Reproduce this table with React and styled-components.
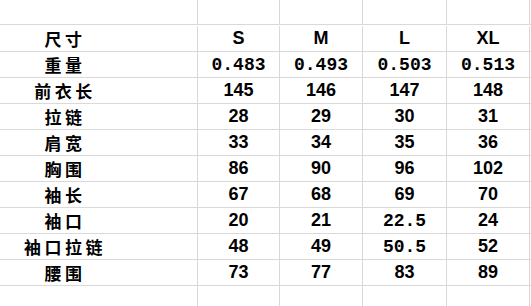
import React from "react";
import styled, { createGlobalStyle } from "styled-components";

const sizes = ["S", "M", "L", "XL"];

const rows = [
  { label: "重量", values: ["0.483", "0.493", "0.503", "0.513"] },
  { label: "前衣长", values: ["145", "146", "147", "148"] },
  { label: "拉链", values: ["28", "29", "30", "31"] },
  { label: "肩宽", values: ["33", "34", "35", "36"] },
  { label: "胸围", values: ["86", "90", "96", "102"] },
  { label: "袖长", values: ["67", "68", "69", "70"] },
  { label: "袖口", values: ["20", "21", "22.5", "24"] },
  { label: "袖口拉链", values: ["48", "49", "50.5", "52"] },
  { label: "腰围", values: ["73", "77", "83", "89"] },
];

export default function App() {
  return (
    <>
      <GlobalStyle />
      <Sheet>
        <Cell $edge />
        {sizes.map((s) => (
          <Cell key={"top" + s} $edge />
        ))}
        <Cell $edge $last />

        <LabelCell>尺寸</LabelCell>
        {sizes.map((s) => (
          <NumCell key={s}>{s}</NumCell>
        ))}
        <Cell $last />

        {rows.map((row) => (
          <React.Fragment key={row.label}>
            <LabelCell>{row.label}</LabelCell>
            {row.values.map((v, i) => (
              <NumCell key={i} $mono={v.includes(".")}>
                {v}
              </NumCell>
            ))}
            <Cell $last />
          </React.Fragment>
        ))}

        <Cell $bottom />
        {sizes.map((s) => (
          <Cell key={"bottom" + s} $bottom />
        ))}
        <Cell $bottom $last />
      </Sheet>
    </>
  );
}

const GlobalStyle = createGlobalStyle`
  html, body {
    margin: 0;
    padding: 0;
    background: #ffffff;
  }
  body {
    width: 531px;
    height: 306px;
    overflow: hidden;
  }
`;

const Sheet = styled.div`
  display: grid;
  grid-template-columns: 198px 82px 83px 84px 83px 1fr;
  grid-auto-rows: 26px;
  width: 531px;
  height: 306px;
  overflow: hidden;
  background: #ffffff;
  color: #000000;
`;

const Cell = styled.div`
  box-sizing: border-box;
  display: flex;
  align-items: center;
  justify-content: center;
  border-right: ${(p) => (p.$last ? "none" : "1px solid #d9d9d9")};
  border-bottom: ${(p) => (p.$bottom ? "none" : "1px solid #d9d9d9")};
  height: ${(p) => (p.$edge ? "25px" : p.$bottom ? "22px" : "26px")};
`;

const LabelCell = styled(Cell)`
  padding-right: 67px;
  font-family: "Noto Sans CJK SC", sans-serif;
  font-weight: 700;
  font-size: 17px;
  letter-spacing: 3.5px;
`;

const NumCell = styled(Cell)`
  font-family: ${(p) =>
    p.$mono ? '"Liberation Mono", monospace' : '"Liberation Sans", Arial, sans-serif'};
  font-weight: 700;
  font-size: 18px;
`;
